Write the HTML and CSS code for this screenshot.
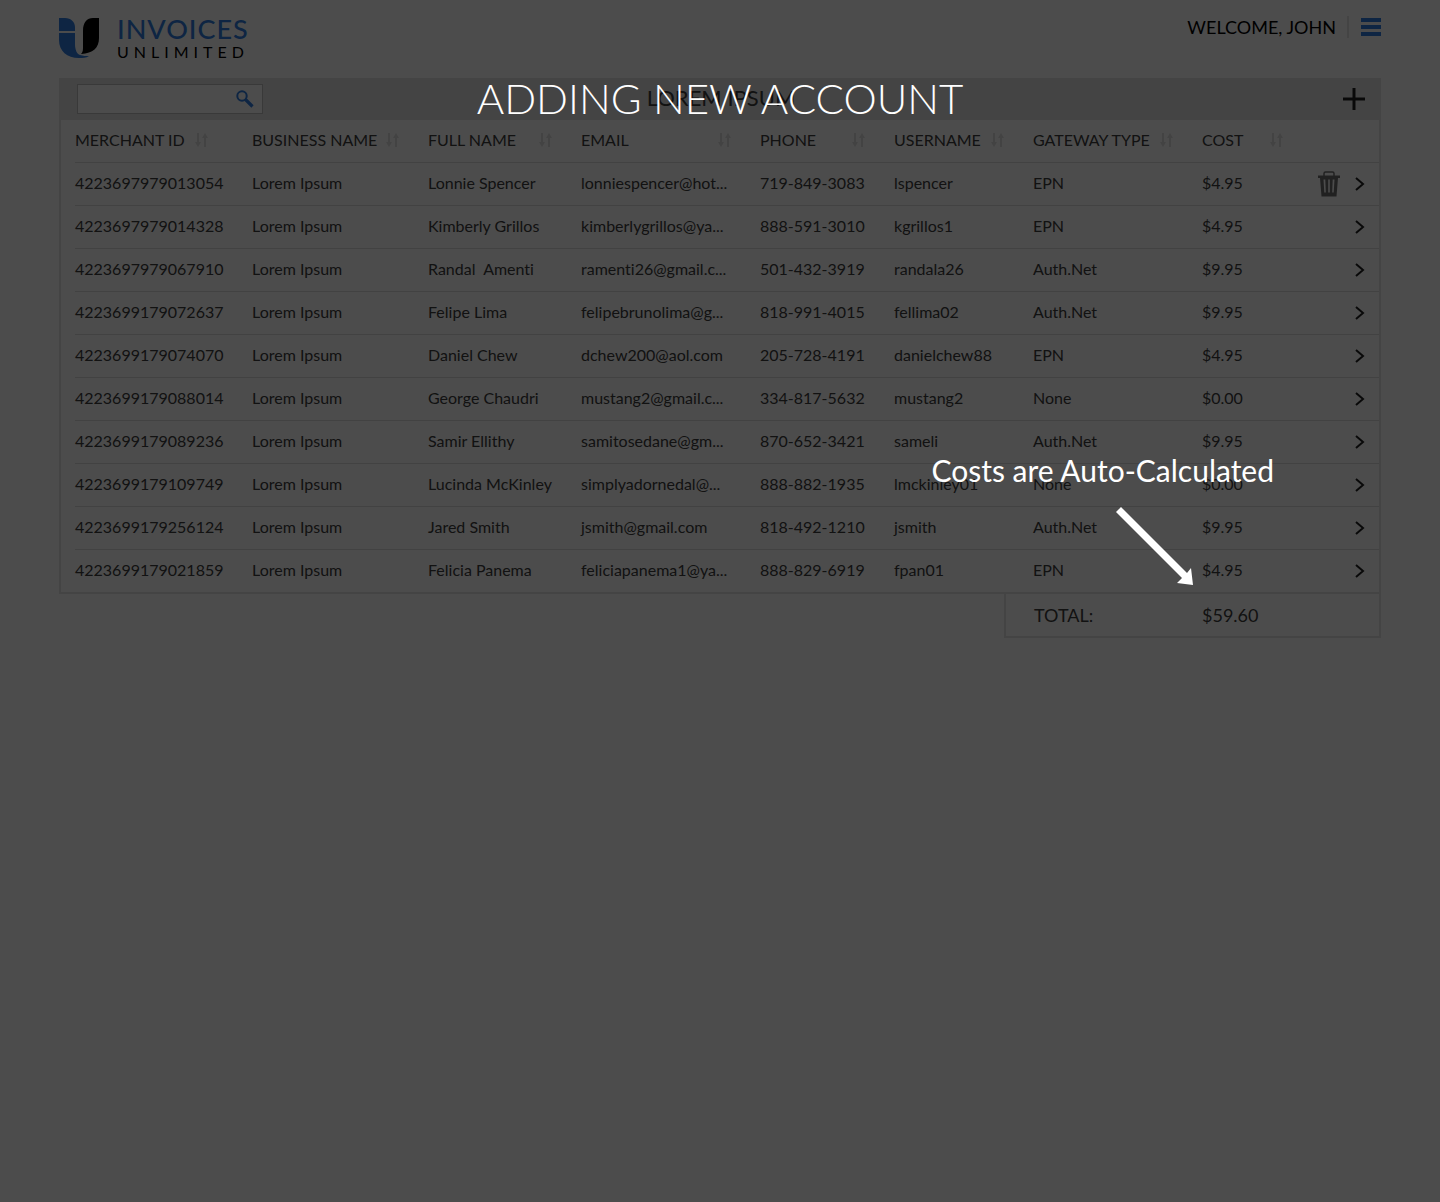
FILE: index.html
```html
<!DOCTYPE html>
<html lang="en">
<head>
<meta charset="utf-8">
<title>Invoices Unlimited</title>
<link rel="stylesheet" href="styles.css">
</head>
<body>
<svg class="sprite" aria-hidden="true">
  <symbol id="sort" viewBox="0 0 13 14"><path d="M2 0h2v9h2l-3 5-3-5h2zM9 14h2V5h2l-3-5-3 5h2z"/></symbol>
  <symbol id="chevron" viewBox="0 0 10 14"><path d="M1 1l7 6-7 6" fill="none" stroke="currentColor" stroke-width="2"/></symbol>
</svg>

<div class="page">
  <header class="site-header">
    <a class="logo" href="#" aria-label="Invoices Unlimited">
      <svg class="logo-mark" viewBox="0 0 40 41" aria-hidden="true">
        <path class="blue" d="M0 0h6c6 0 10 4 10 9v4H0zM0 15h16v11c0 6 2 10 5 11 3 1 6 1 9 1-3 2-6 2-10 2C8 40 0 33 0 22z"/>
        <path class="black" d="M24 13C24 4 28 0 34 0h6v20c0 10-6 15-18 16 2-2 2-4 2-8z"/>
      </svg>
      <span class="logo-text"><span class="logo-top">INVOICES</span><span class="logo-bottom">UNLIMITED</span></span>
    </a>
    <div class="user">
      <span class="welcome">WELCOME, JOHN</span>
      <button class="menu" type="button" aria-label="Menu"><span></span><span></span><span></span></button>
    </div>
  </header>

  <main>
    <div class="toolbar">
      <form class="search" role="search">
        <input type="search" id="q" aria-label="Search accounts">
        <button type="submit" aria-label="Search">
          <svg width="18" height="18" viewBox="0 0 18 18" aria-hidden="true"><circle cx="6" cy="6" r="4.7" fill="none" stroke="currentColor" stroke-width="2"/><path d="M9.500 9.500l7 7" stroke="currentColor" stroke-width="3.200"/></svg>
        </button>
      </form>
      <h1>LOREM IPSUM</h1>
      <button class="add" type="button" aria-label="Add account"><svg width="22" height="22" viewBox="0 0 22 22" aria-hidden="true"><path d="M11 0v22M0 11h22" stroke="currentColor" stroke-width="3"/></svg></button>
    </div>

    <div class="panel">
      <table>
        <colgroup><col class="c-id"><col class="c-business"><col class="c-name"><col class="c-email"><col class="c-phone"><col class="c-user"><col class="c-gateway"><col class="c-cost"><col class="c-actions"></colgroup>
        <thead>
          <tr>
            <th class="first"><div class="head">MERCHANT ID<button type="button" aria-label="Sort by merchant ID"><svg><use href="#sort"/></svg></button></div></th>
            <th><div class="head">BUSINESS NAME<button type="button" aria-label="Sort by business name"><svg><use href="#sort"/></svg></button></div></th>
            <th><div class="head">FULL NAME<button type="button" aria-label="Sort by full name"><svg><use href="#sort"/></svg></button></div></th>
            <th><div class="head">EMAIL<button type="button" aria-label="Sort by email"><svg><use href="#sort"/></svg></button></div></th>
            <th><div class="head">PHONE<button type="button" aria-label="Sort by phone"><svg><use href="#sort"/></svg></button></div></th>
            <th><div class="head">USERNAME<button type="button" aria-label="Sort by username"><svg><use href="#sort"/></svg></button></div></th>
            <th><div class="head">GATEWAY TYPE<button type="button" aria-label="Sort by gateway type"><svg><use href="#sort"/></svg></button></div></th>
            <th><div class="head">COST<button type="button" aria-label="Sort by cost"><svg><use href="#sort"/></svg></button></div></th>
            <td></td>
          </tr>
        </thead>
        <tbody>
          <tr><td>4223697979013054</td><td>Lorem Ipsum</td><td>Lonnie Spencer</td><td>lonniespencer@hot...</td><td>719-849-3083</td><td>lspencer</td><td>EPN</td><td>$4.95</td><td class="tools"><div class="actions"><button class="trash" type="button" aria-label="Delete"><svg width="22" height="26" viewBox="0 0 22 26" aria-hidden="true"><path d="M6 5V2.500Q6 1 7.500 1h7Q16 1 16 2.500V5" fill="none" stroke="currentColor" stroke-width="1.500"/><path d="M0 4.500h22V7H0z" fill="currentColor"/><path fill-rule="evenodd" fill="currentColor" d="M2 7h18l-1.500 18.500h-15zM5.500 8.500l.8 13h1.500l-.5-13zM10.200 8.500v13h1.600v-13zM14.700 8.500l-.5 13h1.500l.8-13z"/></svg></button><a href="#" aria-label="Open"><svg><use href="#chevron"/></svg></a></div></td></tr>
          <tr><td>4223697979014328</td><td>Lorem Ipsum</td><td>Kimberly Grillos</td><td>kimberlygrillos@ya...</td><td>888-591-3010</td><td>kgrillos1</td><td>EPN</td><td>$4.95</td><td class="tools"><div class="actions"><a href="#" aria-label="Open"><svg><use href="#chevron"/></svg></a></div></td></tr>
          <tr><td>4223697979067910</td><td>Lorem Ipsum</td><td>Randal&nbsp; Amenti</td><td>ramenti26@gmail.c...</td><td>501-432-3919</td><td>randala26</td><td>Auth.Net</td><td>$9.95</td><td class="tools"><div class="actions"><a href="#" aria-label="Open"><svg><use href="#chevron"/></svg></a></div></td></tr>
          <tr><td>4223699179072637</td><td>Lorem Ipsum</td><td>Felipe Lima</td><td>felipebrunolima@g...</td><td>818-991-4015</td><td>fellima02</td><td>Auth.Net</td><td>$9.95</td><td class="tools"><div class="actions"><a href="#" aria-label="Open"><svg><use href="#chevron"/></svg></a></div></td></tr>
          <tr><td>4223699179074070</td><td>Lorem Ipsum</td><td>Daniel Chew</td><td>dchew200@aol.com</td><td>205-728-4191</td><td>danielchew88</td><td>EPN</td><td>$4.95</td><td class="tools"><div class="actions"><a href="#" aria-label="Open"><svg><use href="#chevron"/></svg></a></div></td></tr>
          <tr><td>4223699179088014</td><td>Lorem Ipsum</td><td>George Chaudri</td><td>mustang2@gmail.c...</td><td>334-817-5632</td><td>mustang2</td><td>None</td><td>$0.00</td><td class="tools"><div class="actions"><a href="#" aria-label="Open"><svg><use href="#chevron"/></svg></a></div></td></tr>
          <tr><td>4223699179089236</td><td>Lorem Ipsum</td><td>Samir Ellithy</td><td>samitosedane@gm...</td><td>870-652-3421</td><td>sameli</td><td>Auth.Net</td><td>$9.95</td><td class="tools"><div class="actions"><a href="#" aria-label="Open"><svg><use href="#chevron"/></svg></a></div></td></tr>
          <tr><td>4223699179109749</td><td>Lorem Ipsum</td><td>Lucinda McKinley</td><td>simplyadornedal@...</td><td>888-882-1935</td><td>lmckinley01</td><td>None</td><td>$0.00</td><td class="tools"><div class="actions"><a href="#" aria-label="Open"><svg><use href="#chevron"/></svg></a></div></td></tr>
          <tr><td>4223699179256124</td><td>Lorem Ipsum</td><td>Jared Smith</td><td>jsmith@gmail.com</td><td>818-492-1210</td><td>jsmith</td><td>Auth.Net</td><td>$9.95</td><td class="tools"><div class="actions"><a href="#" aria-label="Open"><svg><use href="#chevron"/></svg></a></div></td></tr>
          <tr><td>4223699179021859</td><td>Lorem Ipsum</td><td>Felicia Panema</td><td>feliciapanema1@ya...</td><td>888-829-6919</td><td>fpan01</td><td>EPN</td><td>$4.95</td><td class="tools"><div class="actions"><a href="#" aria-label="Open"><svg><use href="#chevron"/></svg></a></div></td></tr>
        </tbody>
      </table>
    </div>
    <div class="total"><span class="total-label">TOTAL:</span><span>$59.60</span></div>
  </main>

  <div class="overlay">
    <h2>ADDING NEW ACCOUNT</h2>
    <div class="callout">
      <p>Costs are Auto-Calculated</p>
      <svg width="78" height="79" viewBox="0 0 78 79" aria-hidden="true"><path d="M5 0L71 66l4-5 2 17-16-2 5-5L0 5z" fill="#fff"/></svg>
    </div>
  </div>
</div>
</body>
</html>
```
FILE: styles.css
```css
* { box-sizing: border-box; }

body {
  margin: 0;
  background: #fff;
  color: #3c3c3c;
  font-family: Lato, "Liberation Sans", sans-serif;
  font-size: 16px;
  font-variant-ligatures: none;
  line-height: 20px;
}

button {
  padding: 0;
  border: 0;
  background: none;
  color: inherit;
  font: inherit;
}

svg { display: block; }
.sprite { position: absolute; width: 0; height: 0; }

.page {
  position: relative;
  min-height: 100vh;
  padding: 0 59px;
}

/* Header */
.site-header {
  display: flex;
  justify-content: space-between;
  align-items: flex-start;
  height: 78px;
  padding-top: 16px;
}

.logo {
  display: flex;
  gap: 18px;
  text-decoration: none;
}
.logo-mark { width: 40px; height: 41px; margin-top: 2px; }
.blue { fill: #2f7de0; }
.black { fill: #000; }
.logo-text { display: flex; flex-direction: column; }
.logo-top {
  color: #2f7de0;
  font-size: 27px;
  font-weight: 500;
  line-height: 25px;
  letter-spacing: 1px;
}
.logo-bottom {
  color: #000;
  font-size: 16px;
  line-height: 22px;
  letter-spacing: 5px;
}

.user { display: flex; align-items: center; }
.welcome {
  padding-right: 11px;
  border-right: 2px solid #e4e4e4;
  color: #000;
  font-size: 18px;
  line-height: 22px;
}
.menu {
  display: grid;
  gap: 3px;
  width: 20px;
  margin-left: 12px;
}
.menu span { height: 4px; background: #2f7de0; }

/* Toolbar */
.toolbar {
  display: grid;
  grid-template-columns: 1fr auto 1fr;
  align-items: center;
  height: 42px;
  padding: 0 16px 0 18px;
  background: #e4e4e4;
}
.search {
  display: flex;
  align-items: center;
  width: 186px;
  height: 30px;
  padding-right: 8px;
  border: 1px solid #c0c0c0;
  background: #fff;
}
.search input {
  flex: 1;
  min-width: 0;
  border: 0;
  background: none;
  font: inherit;
  appearance: none;
}
.search button { color: #2f7de0; }
h1 {
  margin: 0;
  padding-bottom: 2px;
  font-size: 22px;
  font-weight: 400;
  line-height: 26px;
}
.add { justify-self: end; color: #202020; }

/* Accounts table */
.panel {
  padding-left: 14px;
  border: 2px solid #e4e4e4;
  border-top: 0;
}
table {
  width: 100%;
  table-layout: fixed;
  border-collapse: separate;
  border-spacing: 0;
}
.c-id { width: 177px; }
.c-business { width: 176px; }
.c-name { width: 153px; }
.c-email { width: 179px; }
.c-phone { width: 134px; }
.c-user { width: 139px; }
.c-gateway { width: 169px; }
.c-cost { width: 110px; }
.c-actions { width: 67px; }

th, td {
  height: 43px;
  padding: 0 0 2px;
  border-bottom: 1px solid #dcdcdc;
  font-weight: 400;
  text-align: left;
  white-space: nowrap;
}
.tools { padding-bottom: 0; }
tbody tr:last-child td { height: 42px; border-bottom: 0; }

.head {
  display: flex;
  justify-content: space-between;
  align-items: center;
  padding-right: 29px;
}
.first .head { padding-right: 44px; }
.head svg { width: 13px; height: 14px; fill: #e0e0e0; }

.actions {
  display: flex;
  justify-content: flex-end;
  align-items: center;
  gap: 15px;
  padding-right: 14px;
}
.actions a { color: #202020; }
.actions a svg { width: 10px; height: 14px; }
.trash { color: #707070; }

.total {
  display: flex;
  width: 377px;
  margin-left: auto;
  padding: 11px 28px 10px;
  border: 2px solid #e4e4e4;
  border-top: 0;
  font-size: 18px;
  line-height: 21px;
}
.total-label { width: 168px; }

/* Tour overlay */
.overlay {
  position: absolute;
  inset: 0;
  background: rgba(0, 0, 0, 0.7);
  color: #fff;
}
h2 {
  margin: 0;
  padding-top: 72px;
  font-size: 42px;
  font-weight: 300;
  line-height: 52px;
  text-align: center;
}
.callout {
  position: absolute;
  top: 450px;
  right: 166px;
  font-size: 30px;
  line-height: 40px;
}
.callout p { margin: 0 0 17px; }
.callout svg { margin: 0 80px 0 auto; }
```
